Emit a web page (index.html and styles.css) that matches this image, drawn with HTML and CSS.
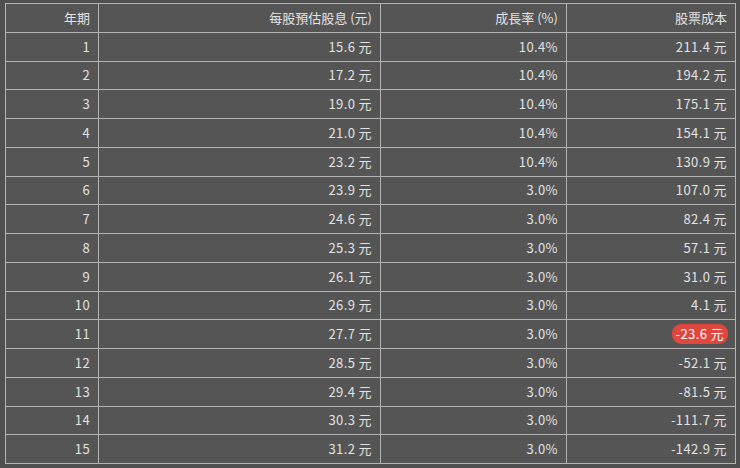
FILE: index.html
```html
<!DOCTYPE html>
<html lang="zh-Hant">
<head>
<meta charset="utf-8">
<link rel="stylesheet" href="styles.css">
</head>
<body>
<table class="grid">
  <thead>
    <tr><th class="c1">年期</th><th class="c2">每股預估股息 (元)</th><th class="c3">成長率 (%)</th><th class="c4">股票成本</th></tr>
  </thead>
  <tbody>
    <tr><td>1</td><td>15.6 元</td><td>10.4%</td><td>211.4 元</td></tr>
    <tr><td>2</td><td>17.2 元</td><td>10.4%</td><td>194.2 元</td></tr>
    <tr><td>3</td><td>19.0 元</td><td>10.4%</td><td>175.1 元</td></tr>
    <tr><td>4</td><td>21.0 元</td><td>10.4%</td><td>154.1 元</td></tr>
    <tr><td>5</td><td>23.2 元</td><td>10.4%</td><td>130.9 元</td></tr>
    <tr><td>6</td><td>23.9 元</td><td>3.0%</td><td>107.0 元</td></tr>
    <tr><td>7</td><td>24.6 元</td><td>3.0%</td><td>82.4 元</td></tr>
    <tr><td>8</td><td>25.3 元</td><td>3.0%</td><td>57.1 元</td></tr>
    <tr><td>9</td><td>26.1 元</td><td>3.0%</td><td>31.0 元</td></tr>
    <tr><td>10</td><td>26.9 元</td><td>3.0%</td><td>4.1 元</td></tr>
    <tr><td>11</td><td>27.7 元</td><td>3.0%</td><td><span class="neg">-23.6 元</span></td></tr>
    <tr><td>12</td><td>28.5 元</td><td>3.0%</td><td>-52.1 元</td></tr>
    <tr><td>13</td><td>29.4 元</td><td>3.0%</td><td>-81.5 元</td></tr>
    <tr><td>14</td><td>30.3 元</td><td>3.0%</td><td>-111.7 元</td></tr>
    <tr><td>15</td><td>31.2 元</td><td>3.0%</td><td>-142.9 元</td></tr>
  </tbody>
</table>
</body>
</html>
```
FILE: styles.css
```css
html, body {
  margin: 0;
  background: #4f4f4f;
}
body {
  padding: 3px 0 0 5px;
  font-family: "Noto Sans CJK TC", "Noto Sans", sans-serif;
  font-size: 13px;
  color: #e2e2e2;
}
.grid {
  border-collapse: collapse;
  width: 731px;
  background: #555555;
  table-layout: fixed;
}
.grid tr {
  height: 28.75px;
}
.grid th, .grid td {
  border: 1px solid #b4b4b4;
  text-align: right;
  vertical-align: middle;
  padding: 0 8px 0 0;
  font-weight: normal;
  line-height: 16px;
  white-space: nowrap;
}
.grid td {
  letter-spacing: 0.4px;
}
.c1 { width: 84px; }
.c2 { width: 273px; }
.c3 { width: 177px; }
.neg {
  display: inline-block;
  background: #e0473f;
  color: #ffffff;
  border-radius: 9px;
  padding: 2px 4px;
  margin-right: -1px;
  vertical-align: middle;
}
```
